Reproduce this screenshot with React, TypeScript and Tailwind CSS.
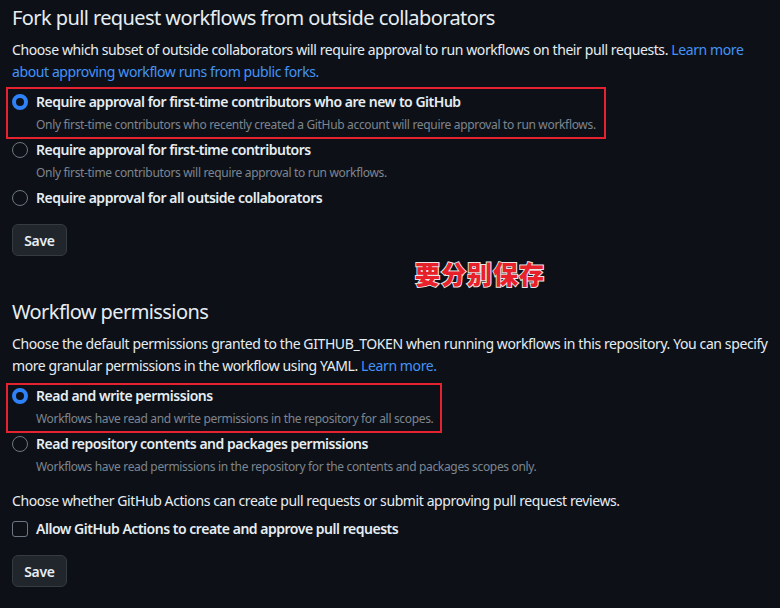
import React from 'react';

const Radio = ({ checked }: { checked?: boolean }) =>
  checked ? (
    <span className="mt-[2px] box-border h-4 w-4 shrink-0 rounded-full border-[4px] border-[#2f81f7] bg-[#0d1117]" />
  ) : (
    <span className="mt-[2px] box-border h-4 w-4 shrink-0 rounded-full border border-[#6e7681] bg-[#0d1117]" />
  );

type OptionProps = {
  label: string;
  desc?: string;
  checked?: boolean;
  boxClass?: string;
};

const Option = ({ label, desc, checked, boxClass }: OptionProps) => (
  <div className="relative">
    {boxClass && <div className={`pointer-events-none absolute border-2 border-[#e5222f] ${boxClass}`} />}
    <div className="flex items-start gap-2">
      <Radio checked={checked} />
      <div className="text-[14px] font-semibold leading-[20px] tracking-[-0.48px] text-[#e6edf3]">{label}</div>
    </div>
    {desc && (
      <div className="mt-[4px] pl-6 text-[12px] leading-[18px] tracking-[-0.33px] text-[#7d8590]">{desc}</div>
    )}
  </div>
);

const SaveButton = () => (
  <button className="box-border h-8 w-[55px] rounded-md border border-[#363b42] bg-[#21262d] text-[14px] font-semibold tracking-[-0.3px] text-[#e6edf3]">
    Save
  </button>
);

const Link = ({ children }: { children: React.ReactNode }) => (
  <a className="text-[#4493f8]">{children}</a>
);

export default function App() {
  return (
    <div className="min-h-screen w-[780px] bg-[#0d1117] px-3 font-['Noto_Sans',sans-serif] text-[#e6edf3]">
      {/* fork pull requests */}
      <h2 className="pt-[3px] text-[20px] font-normal leading-[30px] tracking-[-0.59px]">
        Fork pull request workflows from outside collaborators
      </h2>
      <p className="mt-[6px] text-[14px] leading-[22px] tracking-[-0.4px]">
        Choose which subset of outside collaborators will require approval to run workflows on their pull requests.{' '}
        <Link>
          Learn more
          <br />
          about approving workflow runs from public forks.
        </Link>
      </p>

      <div className="mt-[9px] flex flex-col gap-[6px]">
        <Option
          checked
          label="Require approval for first-time contributors who are new to GitHub"
          desc="Only first-time contributors who recently created a GitHub account will require approval to run workflows."
          boxClass="-top-[5px] -bottom-[5px] -left-[6px] w-[600px]"
        />
        <Option
          label="Require approval for first-time contributors"
          desc="Only first-time contributors will require approval to run workflows."
        />
        <Option label="Require approval for all outside collaborators" />
      </div>

      <div className="mt-4">
        <SaveButton />
      </div>

      <div className="mt-[4px] h-[26px] pl-[403px] font-['Noto_Sans_CJK_SC',sans-serif] text-[25px] font-black leading-[26px] tracking-[1px] text-[#e8202a] [-webkit-text-stroke:2px_#e6e6e6] [paint-order:stroke_fill]">
        要分别保存
      </div>

      {/* workflow permissions */}
      <h2 className="mt-[11px] text-[20px] font-normal leading-[30px] tracking-[-0.59px]">Workflow permissions</h2>
      <p className="mt-[6px] text-[14px] leading-[22px] tracking-[-0.4px]">
        Choose the default permissions granted to the GITHUB_TOKEN when running workflows in this repository. You can
        specify
        <br />
        more granular permissions in the workflow using YAML. <Link>Learn more.</Link>
      </p>

      <div className="mt-[9px] flex flex-col gap-[6px]">
        <Option
          checked
          label="Read and write permissions"
          desc="Workflows have read and write permissions in the repository for all scopes."
          boxClass="-top-[3px] -bottom-[5px] -left-[6px] w-[436px]"
        />
        <Option
          label="Read repository contents and packages permissions"
          desc="Workflows have read permissions in the repository for the contents and packages scopes only."
        />
      </div>

      <p className="mt-[14px] text-[14px] leading-[21px] tracking-[-0.4px]">
        Choose whether GitHub Actions can create pull requests or submit approving pull request reviews.
      </p>

      <label className="mt-2 flex items-start gap-2">
        <span className="mt-[2px] box-border h-4 w-4 shrink-0 rounded-[3px] border border-[#6e7681]" />
        <span className="text-[14px] font-semibold leading-[20px] tracking-[-0.48px]">
          Allow GitHub Actions to create and approve pull requests
        </span>
      </label>

      <div className="mt-4 pb-6">
        <SaveButton />
      </div>
    </div>
  );
}
